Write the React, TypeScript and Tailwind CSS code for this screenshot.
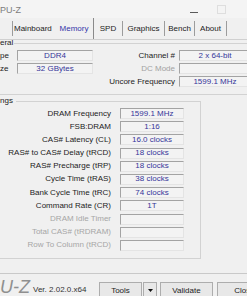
import React from "react";

function Box({ children, className }: { children?: React.ReactNode; className: string }) {
  return (
    <div
      className={`h-[11px] shrink-0 flex items-center justify-center border border-t-[#a3a3a3] border-l-[#a3a3a3] border-b-[#e4e4e4] border-r-[#e4e4e4] bg-[#f3f3f3] text-[#35359a] whitespace-nowrap ${className}`}
    >
      {children}
    </div>
  );
}

const timings: { label: string; value: string; disabled?: boolean }[] = [
  { label: "DRAM Frequency", value: "1599.1 MHz" },
  { label: "FSB:DRAM", value: "1:16" },
  { label: "CAS# Latency (CL)", value: "16.0 clocks" },
  { label: "RAS# to CAS# Delay (tRCD)", value: "18 clocks" },
  { label: "RAS# Precharge (tRP)", value: "18 clocks" },
  { label: "Cycle Time (tRAS)", value: "38 clocks" },
  { label: "Bank Cycle Time (tRC)", value: "74 clocks" },
  { label: "Command Rate (CR)", value: "1T" },
  { label: "DRAM Idle Timer", value: "", disabled: true },
  { label: "Total CAS# (tRDRAM)", value: "", disabled: true },
  { label: "Row To Column (tRCD)", value: "", disabled: true },
];

export default function App() {
  return (
    <div className="w-[247px] h-[296px] overflow-hidden bg-[#f0f0f0] flex flex-col font-['Liberation_Sans',Arial,sans-serif] text-[8px] leading-none text-[#1c1c1c]">
      {/* Title bar */}
      <div className="h-[18px] shrink-0 flex items-start bg-[#f4f4f4]">
        <div className="w-[190px] shrink-0 mt-[6px] text-[9px] text-[#7c7c7c]">PU-Z</div>
        <div className="w-[8px] h-px shrink-0 bg-[#5a5a5a] mt-[12px]" />
        <div className="w-[9px] h-[9px] shrink-0 ml-[19px] mt-[5px] border border-[#dedede]" />
      </div>

      {/* Tabs */}
      <div className="h-[21px] shrink-0 flex items-center">
        <div className="w-[12px] shrink-0" />
        <div className="w-px h-[15px] shrink-0 bg-[#9c9c9c]" />
        <div className="w-[42px] shrink-0 pl-[1px]">Mainboard</div>
        <div className="w-[38px] shrink-0 text-center text-[#3434a8]">Memory</div>
        <div className="w-px h-[21px] shrink-0 bg-[#8a8a8a]" />
        <div className="w-[28px] shrink-0 text-center">SPD</div>
        <div className="w-px h-[15px] shrink-0 bg-[#9c9c9c]" />
        <div className="w-[41px] shrink-0 text-center">Graphics</div>
        <div className="w-px h-[15px] shrink-0 bg-[#9c9c9c]" />
        <div className="w-[29px] shrink-0 text-center">Bench</div>
        <div className="w-px h-[15px] shrink-0 bg-[#9c9c9c]" />
        <div className="w-[31px] shrink-0 text-center">About</div>
        <div className="w-px h-[15px] shrink-0 bg-[#9c9c9c]" />
      </div>

      {/* Panel */}
      <div className="h-[235px] shrink-0 flex flex-col border-t border-b border-t-[#d0d0d0] border-b-[#c9c9c9]">
        {/* General */}
        <div className="w-[251px] shrink-0 flex flex-col border-b border-b-[#d2d2d2] pb-[7px]">
          <div className="h-[6px] flex items-center">
            <span className="pr-[1px] whitespace-nowrap">eral</span>
            <div className="flex-1 h-px bg-[#d2d2d2]" />
          </div>
          <div className="pt-[4px] flex flex-col gap-[2px]">
            <div className="h-[11px] flex items-center">
              <span className="w-[17px] shrink-0">pe</span>
              <Box className="w-[76px]">DDR4</Box>
              <span className="flex-1 text-right pr-[4px] whitespace-nowrap">Channel #</span>
              <Box className="w-[72px]">2 x 64-bit</Box>
            </div>
            <div className="h-[11px] flex items-center">
              <span className="w-[17px] shrink-0">ze</span>
              <Box className="w-[76px]">32 GBytes</Box>
              <span className="flex-1 text-right pr-[4px] whitespace-nowrap text-[#a2a2a2]">DC Mode</span>
              <Box className="w-[72px]" />
            </div>
            <div className="h-[11px] flex items-center">
              <span className="flex-1 text-right pr-[4px] whitespace-nowrap">Uncore Frequency</span>
              <Box className="w-[72px]">1599.1 MHz</Box>
            </div>
          </div>
        </div>

        {/* Timings */}
        <div className="w-[201px] shrink-0 mt-[3px] flex flex-col">
          <div className="h-[6px] flex items-center">
            <span className="pr-[3px] whitespace-nowrap">ngs</span>
            <div className="flex-1 self-end h-[3px] border-t border-r border-[#d2d2d2]" />
          </div>
          <div className="pt-[4px] pb-[7px] flex flex-col gap-[2.2px] border-r border-b border-[#d2d2d2]">
            {timings.map((t) => (
              <div key={t.label} className="h-[11px] flex items-center">
                <span
                  className={`w-[111px] shrink-0 text-right whitespace-nowrap ${t.disabled ? "text-[#a6a6a6]" : ""}`}
                >
                  {t.label}
                </span>
                <Box className="w-[64px] ml-[9px]">{t.value}</Box>
              </div>
            ))}
          </div>
        </div>
        <div className="flex-1" />
      </div>

      {/* Bottom bar */}
      <div className="flex-1 flex items-start">
        <div className="w-[33px] shrink-0 mt-[4px] text-[18px] italic text-[#8f8f8f] whitespace-nowrap">U-Z</div>
        <div className="w-[66px] shrink-0 mt-[12px] text-[#333] whitespace-nowrap">Ver. 2.02.0.x64</div>
        <div className="w-[43px] h-[17px] shrink-0 mt-[8px] flex items-center justify-center border border-[#adadad] bg-[#e8e8e8]">
          Tools
        </div>
        <div className="w-[14px] h-[17px] shrink-0 ml-[1px] mt-[8px] flex items-center justify-center border border-[#adadad] bg-[#e8e8e8]">
          <svg width="5" height="3" viewBox="0 0 5 3">
            <path d="M0 0H5L2.5 3Z" fill="#111" />
          </svg>
        </div>
        <div className="w-[53px] h-[17px] shrink-0 ml-[3px] mt-[8px] flex items-center justify-center border border-[#adadad] bg-[#e8e8e8]">
          Validate
        </div>
        <div className="w-[55px] h-[17px] shrink-0 ml-[4px] mt-[8px] flex items-center justify-center border border-[#adadad] bg-[#e8e8e8]">
          Close
        </div>
      </div>
    </div>
  );
}
